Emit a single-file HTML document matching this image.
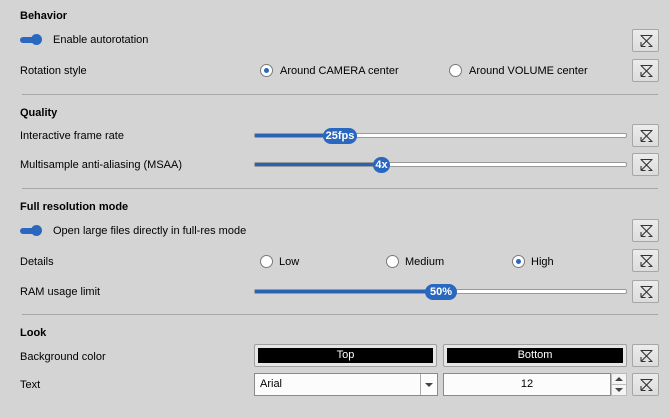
<!DOCTYPE html>
<html><head><meta charset="utf-8"><style>
*{margin:0;padding:0;box-sizing:border-box}
body{width:669px;height:417px;background:#d4d4d4;font-family:"Liberation Sans",sans-serif;font-size:11px;color:#000;position:relative;overflow:hidden}
.a{position:absolute;white-space:nowrap;margin-top:1px}
.h{font-weight:bold}
.sep{position:absolute;left:22px;width:636px;height:1px;background:#a8a8a8}
.rb{position:absolute;left:632px;width:27px;height:23px;border:1px solid #a6a6a6;border-radius:2px;background:linear-gradient(#ececec,#dcdcdc)}
.rb svg{position:absolute;left:6px;top:4px}
.tog{position:absolute;left:20px;width:22px;height:10px}
.tog:before{content:"";position:absolute;left:0;top:2px;width:16px;height:6px;border-radius:3px;background:#2a68c0}
.tog:after{content:"";position:absolute;left:11px;top:-1px;width:11px;height:11px;border-radius:50%;background:#2a68c0}
.rad{position:absolute;width:13px;height:13px;border-radius:50%;border:1px solid #7a7a7a;background:#fff}
.rad.on:after{content:"";position:absolute;left:3px;top:3px;width:5px;height:5px;border-radius:50%;background:#2a68c0}
.trk{position:absolute;left:254px;width:373px;height:5px;border:1px solid #9a9a9a;border-radius:2px;background:#fff}
.fill{position:absolute;left:0;top:0;height:100%;background:#2a62b4}
.hd{position:absolute;height:16px;border-radius:8px;background:#2a68c0;color:#fff;font-weight:bold;font-size:11px;line-height:16px;text-align:center}
.cb{position:absolute;height:23px;border:1px solid #a0a0a0;border-radius:2px;background:#e6e6e6;padding:3px}
.cb div{background:#000;color:#fff;height:100%;text-align:center;line-height:15px}
.in{position:absolute;height:23px;border:1px solid #8a8a8a;background:#fcfcfc;line-height:21px}
</style></head><body>
<svg width="0" height="0" style="position:absolute"><defs><symbol id="r" viewBox="0 0 15 14"><path d="M1.5 1.5H13.5M2 1.5L13 12.5M13 1.5L2.5 12M2 12.5V8M2 12.5H6.5M9.5 12.5H13.5" stroke="#333" stroke-width="1.1" fill="none"/></symbol></defs></svg>

<div class="a h" style="left:20px;top:9px">Behavior</div>
<div class="tog" style="top:35px"></div>
<div class="a" style="left:53px;top:33px">Enable autorotation</div>
<div class="rb" style="top:29px"><svg width="15" height="14"><use href="#r"/></svg></div>
<div class="a" style="left:20px;top:64px">Rotation style</div>
<div class="rad on" style="left:260px;top:64px"></div>
<div class="a" style="left:280px;top:64px">Around CAMERA center</div>
<div class="rad" style="left:449px;top:64px"></div>
<div class="a" style="left:469px;top:64px">Around VOLUME center</div>
<div class="rb" style="top:59px"><svg width="15" height="14"><use href="#r"/></svg></div>
<div class="sep" style="top:94px"></div>

<div class="a h" style="left:20px;top:106px">Quality</div>
<div class="a" style="left:20px;top:129px">Interactive frame rate</div>
<div class="trk" style="top:133px"><div class="fill" style="width:75px"></div></div>
<div class="hd" style="left:323px;top:128px;width:34px">25fps</div>
<div class="rb" style="top:124px"><svg width="15" height="14"><use href="#r"/></svg></div>
<div class="a" style="left:20px;top:158px">Multisample anti-aliasing (MSAA)</div>
<div class="trk" style="top:162px"><div class="fill" style="width:125px"></div></div>
<div class="hd" style="left:373px;top:157px;width:17px">4x</div>
<div class="rb" style="top:153px"><svg width="15" height="14"><use href="#r"/></svg></div>
<div class="sep" style="top:188px"></div>

<div class="a h" style="left:20px;top:200px">Full resolution mode</div>
<div class="tog" style="top:226px"></div>
<div class="a" style="left:53px;top:224px">Open large files directly in full-res mode</div>
<div class="rb" style="top:219px"><svg width="15" height="14"><use href="#r"/></svg></div>
<div class="a" style="left:20px;top:255px">Details</div>
<div class="rad" style="left:260px;top:255px"></div>
<div class="a" style="left:279px;top:255px">Low</div>
<div class="rad" style="left:386px;top:255px"></div>
<div class="a" style="left:405px;top:255px">Medium</div>
<div class="rad on" style="left:512px;top:255px"></div>
<div class="a" style="left:531px;top:255px">High</div>
<div class="rb" style="top:249px"><svg width="15" height="14"><use href="#r"/></svg></div>
<div class="a" style="left:20px;top:285px">RAM usage limit</div>
<div class="trk" style="top:289px"><div class="fill" style="width:175px"></div></div>
<div class="hd" style="left:425px;top:284px;width:32px">50%</div>
<div class="rb" style="top:280px"><svg width="15" height="14"><use href="#r"/></svg></div>
<div class="sep" style="top:314px"></div>

<div class="a h" style="left:20px;top:326px">Look</div>
<div class="a" style="left:20px;top:350px">Background color</div>
<div class="cb" style="left:254px;top:344px;width:183px"><div>Top</div></div>
<div class="cb" style="left:443px;top:344px;width:184px"><div>Bottom</div></div>
<div class="rb" style="top:344px"><svg width="15" height="14"><use href="#r"/></svg></div>
<div class="a" style="left:20px;top:378px">Text</div>
<div class="in" style="left:254px;top:373px;width:184px;padding-left:5px">Arial
<div style="position:absolute;right:0;top:0;width:17px;height:21px;border-left:1px solid #aaa"><div style="position:absolute;left:4px;top:9px;border-left:4px solid transparent;border-right:4px solid transparent;border-top:4px solid #444"></div></div></div>
<div class="in" style="left:443px;top:373px;width:168px;text-align:center">12</div>
<div style="position:absolute;left:611px;top:373px;width:16px;height:23px;background:#f4f4f4;border:1px solid #bbb">
<div style="position:absolute;left:3px;top:3px;border-left:4px solid transparent;border-right:4px solid transparent;border-bottom:4px solid #444"></div>
<div style="position:absolute;left:0;top:10px;width:14px;height:1px;background:#bbb"></div>
<div style="position:absolute;left:3px;top:14px;border-left:4px solid transparent;border-right:4px solid transparent;border-top:4px solid #444"></div></div>
<div class="rb" style="top:373px"><svg width="15" height="14"><use href="#r"/></svg></div>
</body></html>
